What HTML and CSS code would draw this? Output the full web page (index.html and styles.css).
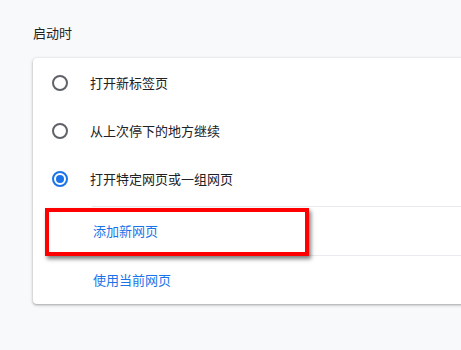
FILE: index.html
```html
<!DOCTYPE html>
<html lang="zh-CN">
<head>
<meta charset="utf-8">
<title>启动时</title>
<link rel="stylesheet" href="styles.css">
</head>
<body>
<div class="page">
  <h2 class="section-title">启动时</h2>
  <div class="card">
    <div class="radio-group">
      <div class="radio-row">
        <span class="radio"></span>
        <span class="label">打开新标签页</span>
      </div>
      <div class="radio-row">
        <span class="radio"></span>
        <span class="label">从上次停下的地方继续</span>
      </div>
      <div class="radio-row">
        <span class="radio checked"></span>
        <span class="label">打开特定网页或一组网页</span>
      </div>
    </div>
    <div class="link-list">
      <div class="link-row"><span class="link">添加新网页</span></div>
      <div class="link-row"><span class="link">使用当前网页</span></div>
    </div>
    <div class="highlight"></div>
  </div>
</div>
</body>
</html>
```

FILE: styles.css
```css
html, body {
  margin: 0;
  padding: 0;
  overflow: hidden;
}
body {
  background: #f8f9fa;
  font-family: "Noto Sans CJK SC", "Noto Sans", sans-serif;
  font-size: 13px;
  color: #202124;
  width: 461px;
  height: 350px;
}
.page {
  box-sizing: border-box;
  width: 461px;
  height: 350px;
  overflow: hidden;
  padding: 20px 0 0 33px;
}
.section-title {
  margin: 0 0 12px 0;
  font-size: 13px;
  font-weight: 400;
  line-height: 26px;
  color: #202124;
}
.card {
  position: relative;
  margin-right: -20px;
  background: #fff;
  border-radius: 4px;
  box-shadow: 0 1px 2px rgba(60, 64, 67, 0.3), 0 1px 3px 1px rgba(60, 64, 67, 0.15);
  padding-top: 1px;
  padding-bottom: 0;
}
.radio-group {
  padding-bottom: 3px;
}
.radio-row {
  display: flex;
  align-items: center;
  height: 48px;
  padding-left: 19px;
  gap: 22px;
}
.radio {
  box-sizing: border-box;
  width: 16px;
  height: 16px;
  border: 2px solid #5f6368;
  border-radius: 50%;
  display: flex;
  align-items: center;
  justify-content: center;
  flex: none;
}
.radio.checked {
  border-color: #1a73e8;
}
.radio.checked::after {
  content: "";
  width: 8px;
  height: 8px;
  border-radius: 50%;
  background: #1a73e8;
}
.label {
  line-height: 20px;
}
.link-list {
  margin-left: 59px;
}
.link-row {
  border-top: 1px solid #e8eaed;
  height: 48px;
  display: flex;
  align-items: center;
  padding-left: 1px;
}
.link {
  color: #1a73e8;
  line-height: 20px;
}
.highlight {
  position: absolute;
  left: 12px;
  top: 150px;
  width: 256px;
  height: 40px;
  border: 4px solid #ff0000;
  box-shadow: 2px 3px 4px rgba(0, 0, 0, 0.5);
  pointer-events: none;
}
```
